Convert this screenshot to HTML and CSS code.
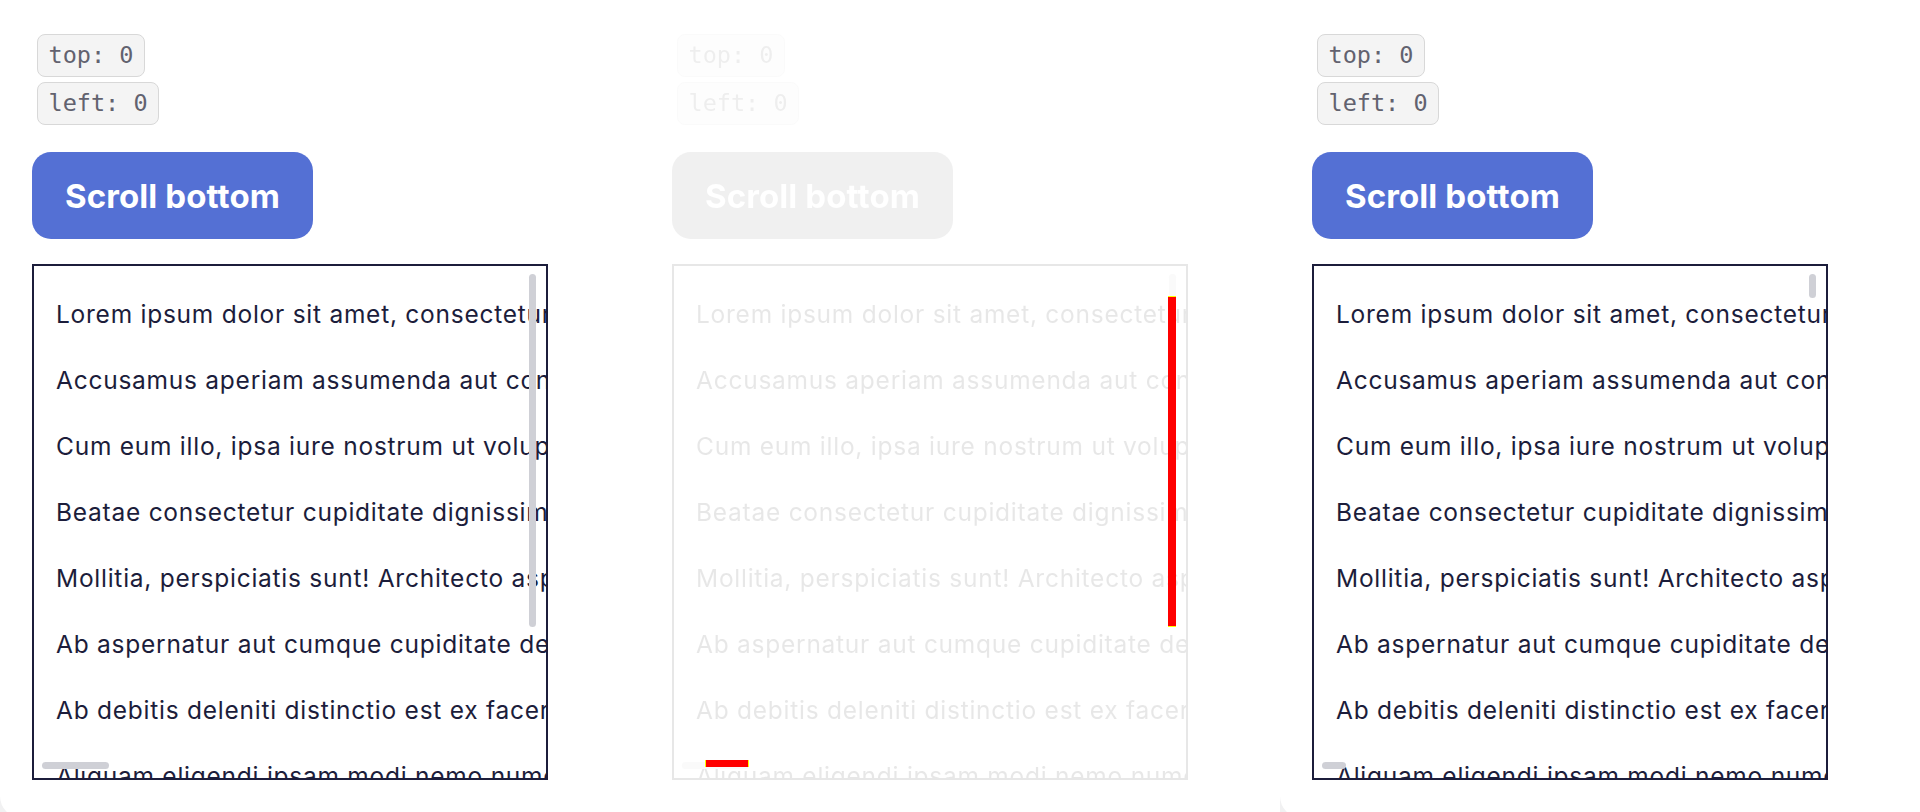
FILE: index.html
```html
<!DOCTYPE html>
<html lang="en">
<head>
<meta charset="utf-8">
<title>Scroll demo</title>
<link rel="stylesheet" href="styles.css">
</head>
<body>
<main class="page">
  <div class="col">
    <section class="card">
      <div class="badges">
        <code class="badge">top: 0</code>
        <code class="badge">left: 0</code>
      </div>
      <button class="btn" type="button">Scroll bottom</button>
      <div class="viewport">
        <div class="content">
          <p>Lorem ipsum dolor sit amet, consectetur adipisicing elit. Quisquam, voluptatum.</p>
          <p>Accusamus aperiam assumenda aut consequatur corporis debitis dolor.</p>
          <p>Cum eum illo, ipsa iure nostrum ut voluptatem quibusdam quas.</p>
          <p>Beatae consectetur cupiditate dignissimos eius error et expedita.</p>
          <p>Mollitia, perspiciatis sunt! Architecto aspernatur at delectus.</p>
          <p>Ab aspernatur aut cumque cupiditate delectus distinctio dolorem.</p>
          <p>Ab debitis deleniti distinctio est ex facere fugiat harum.</p>
          <p>Aliquam eligendi ipsam modi nemo numquam officiis omnis.</p>
        </div>
        <span class="thumb thumb-v"></span>
        <span class="thumb thumb-h"></span>
      </div>
    </section>
  </div>

  <div class="col col-muted">
    <section class="card card-muted">
      <div class="badges">
        <code class="badge">top: 0</code>
        <code class="badge">left: 0</code>
      </div>
      <button class="btn" type="button">Scroll bottom</button>
      <div class="viewport">
        <div class="content">
          <p>Lorem ipsum dolor sit amet, consectetur adipisicing elit. Quisquam, voluptatum.</p>
          <p>Accusamus aperiam assumenda aut consequatur corporis debitis dolor.</p>
          <p>Cum eum illo, ipsa iure nostrum ut voluptatem quibusdam quas.</p>
          <p>Beatae consectetur cupiditate dignissimos eius error et expedita.</p>
          <p>Mollitia, perspiciatis sunt! Architecto aspernatur at delectus.</p>
          <p>Ab aspernatur aut cumque cupiditate delectus distinctio dolorem.</p>
          <p>Ab debitis deleniti distinctio est ex facere fugiat harum.</p>
          <p>Aliquam eligendi ipsam modi nemo numquam officiis omnis.</p>
        </div>
        <span class="thumb thumb-v"></span>
        <span class="thumb thumb-h"></span>
      </div>
    </section>
    <span class="mark mark-v"></span>
    <span class="mark mark-h"></span>
  </div>

  <div class="col">
    <section class="card">
      <div class="badges">
        <code class="badge">top: 0</code>
        <code class="badge">left: 0</code>
      </div>
      <button class="btn" type="button">Scroll bottom</button>
      <div class="viewport">
        <div class="content">
          <p>Lorem ipsum dolor sit amet, consectetur adipisicing elit. Quisquam, voluptatum.</p>
          <p>Accusamus aperiam assumenda aut consequatur corporis debitis dolor.</p>
          <p>Cum eum illo, ipsa iure nostrum ut voluptatem quibusdam quas.</p>
          <p>Beatae consectetur cupiditate dignissimos eius error et expedita.</p>
          <p>Mollitia, perspiciatis sunt! Architecto aspernatur at delectus.</p>
          <p>Ab aspernatur aut cumque cupiditate delectus distinctio dolorem.</p>
          <p>Ab debitis deleniti distinctio est ex facere fugiat harum.</p>
          <p>Aliquam eligendi ipsam modi nemo numquam officiis omnis.</p>
        </div>
        <span class="thumb thumb-v thumb-v-short"></span>
        <span class="thumb thumb-h thumb-h-short"></span>
      </div>
    </section>
  </div>
</main>
</body>
</html>
```

FILE: styles.css
```css
html, body {
  margin: 0;
  padding: 0;
  background: #ffffff;
}

.page {
  display: grid;
  grid-template-columns: repeat(3, 640px);
  height: 812px;
  overflow: hidden;
  background: #f1f1f2;
  font-family: Inter, "Noto Sans", sans-serif;
}

.col {
  position: relative;
}

.col-muted {
  background: #ffffff;
}

.card {
  height: 818px;
  box-sizing: border-box;
  padding: 34px 0 0 32px;
  background: #ffffff;
  border-radius: 0 0 0 22px;
  display: flex;
  flex-direction: column;
  align-items: flex-start;
}

.card-muted {
  filter: grayscale(1);
  opacity: 0.1;
}

.badges {
  display: flex;
  flex-direction: column;
  align-items: flex-start;
  gap: 5px;
  margin-left: 5px;
}

.badge {
  font-family: "DejaVu Sans Mono", "Liberation Mono", monospace;
  font-size: 23.5px;
  line-height: 27px;
  padding: 7px 10.5px;
  border: 1.5px solid #d8d8d8;
  border-radius: 8px;
  background: #f4f4f4;
  color: #62626f;
}

.btn {
  margin-top: 27px;
  height: 87px;
  padding: 0 33px;
  border: none;
  border-radius: 19px;
  background: #5470d4;
  color: #ffffff;
  font-family: Inter, "Noto Sans", sans-serif;
  font-weight: 700;
  font-size: 33px;
  letter-spacing: 0.1px;
}

.viewport {
  position: relative;
  margin-top: 25px;
  width: 516px;
  height: 516px;
  box-sizing: border-box;
  border: 2px solid #1c1d3b;
  background: #ffffff;
  overflow: hidden;
}

.content {
  padding: 30px 0 0 22px;
  display: flex;
  flex-direction: column;
  gap: 30px;
}

.content p {
  margin: 0;
  font-size: 24.5px;
  line-height: 36px;
  letter-spacing: 0.75px;
  color: #1c1d3b;
  white-space: nowrap;
}

.thumb {
  position: absolute;
  background: #cfd0d6;
  border-radius: 4px;
}

.thumb-v {
  top: 8px;
  right: 10px;
  width: 7px;
  height: 353px;
}

.thumb-h {
  left: 8px;
  bottom: 9px;
  width: 67px;
  height: 7px;
}

.thumb-v-short {
  height: 24px;
}

.thumb-h-short {
  width: 24px;
}

.mark {
  position: absolute;
  background: #ff0000;
  box-sizing: border-box;
}

.mark-v {
  left: 528px;
  top: 296px;
  width: 8px;
  height: 331px;
  border-top: 1px solid #ffff00;
  border-bottom: 1px solid #ffff00;
}

.mark-h {
  left: 65px;
  top: 760px;
  width: 44px;
  height: 7px;
  border-left: 1px solid #ffff00;
  border-right: 1px solid #ffff00;
}
```
